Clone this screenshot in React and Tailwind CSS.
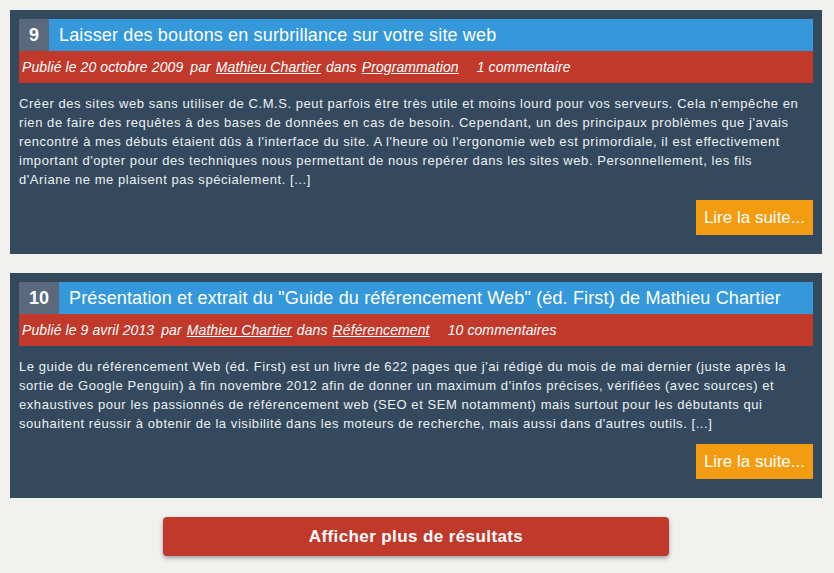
import React from "react";

const posts = [
  {
    n: "9",
    title: "Laisser des boutons en surbrillance sur votre site web",
    date: "20 octobre 2009",
    cat: "Programmation",
    comments: "1 commentaire",
    text: "Créer des sites web sans utiliser de C.M.S. peut parfois être très utile et moins lourd pour vos serveurs. Cela n'empêche en rien de faire des requêtes à des bases de données en cas de besoin. Cependant, un des principaux problèmes que j'avais rencontré à mes débuts étaient dûs à l'interface du site. A l'heure où l'ergonomie web est primordiale, il est effectivement important d'opter pour des techniques nous permettant de nous repérer dans les sites web. Personnellement, les fils d'Ariane ne me plaisent pas spécialement. [...]",
  },
  {
    n: "10",
    title: "Présentation et extrait du \"Guide du référencement Web\" (éd. First) de Mathieu Chartier",
    date: "9 avril 2013",
    cat: "Référencement",
    comments: "10 commentaires",
    text: "Le guide du référencement Web (éd. First) est un livre de 622 pages que j'ai rédigé du mois de mai dernier (juste après la sortie de Google Penguin) à fin novembre 2012 afin de donner un maximum d'infos précises, vérifiées (avec sources) et exhaustives pour les passionnés de référencement web (SEO et SEM notamment) mais surtout pour les débutants qui souhaitent réussir à obtenir de la visibilité dans les moteurs de recherche, mais aussi dans d'autres outils. [...]",
  },
];

function Post({ p }) {
  return (
    <div className="bg-[#34495e] p-[9px] pb-[19px]">
      <div className="flex h-8 items-stretch">
        <div className="flex items-center justify-center bg-[#5a6a7c] px-[10px] text-[18px] font-bold text-white">
          {p.n}
        </div>
        <div className="flex flex-1 items-center bg-[#3498db] px-[10px] text-[18px] tracking-[0.15px] text-white">
          {p.title}
        </div>
      </div>
      <div className="flex h-8 items-center bg-[#c0392b] px-[3px] text-[14px] italic tracking-[0.1px] text-white">
        <span>Publié le {p.date}</span>
        <span className="ml-[7px]">par</span>
        <span className="ml-[5px] underline">Mathieu Chartier</span>
        <span className="ml-[5px]">dans</span>
        <span className="ml-[5px] underline">{p.cat}</span>
        <span className="ml-[18px]">{p.comments}</span>
      </div>
      <p className="mt-[11px] pr-[14px] text-[13px] leading-[19px] tracking-[0.56px] text-[#ecf0f1]">{p.text}</p>
      <div className="mt-[11px] flex justify-end">
        <div className="flex h-[35px] items-center bg-[#f39c12] px-[8px] text-[17px] text-white">
          Lire la suite...
        </div>
      </div>
    </div>
  );
}

export default function App() {
  return (
    <div
      className="min-h-[573px] w-[834px] bg-[#f1f1f0] px-[10px] pt-[10px] pb-[16px]"
      style={{ fontFamily: '"Liberation Sans", Arial, sans-serif' }}
    >
      <div className="flex w-[812px] flex-col gap-[19px]">
        {posts.map((p) => (
          <Post key={p.n} p={p} />
        ))}
      </div>
      <div className="mt-[19px] flex justify-center pr-[2px]">
        <div className="flex h-[39px] w-[506px] items-center justify-center rounded-[4px] bg-[#c0392b] text-[17px] font-bold tracking-[0.4px] text-white shadow-[0_2px_4px_rgba(0,0,0,0.35)]">
          Afficher plus de résultats
        </div>
      </div>
    </div>
  );
}
